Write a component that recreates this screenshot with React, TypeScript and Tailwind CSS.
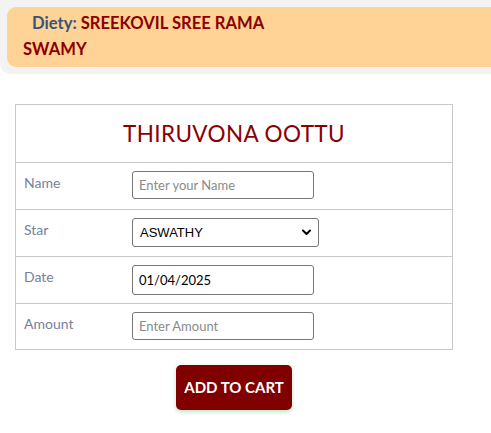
import React from "react";

const labelCls =
  "w-[116px] shrink-0 pl-[8px] pt-[10px] text-[14px] leading-[20px] text-[#76819b]";
const inputCls =
  "mt-[8px] w-[182px] h-[28px] border border-[#767676] rounded-[3px] px-[6px] text-[13px] text-black placeholder:text-[#8a8a8a] bg-white outline-none";

export default function App() {
  return (
    <div
      className="min-h-[433px] w-[491px] bg-white"
      style={{ fontFamily: "Lato, 'Open Sans', sans-serif" }}
    >
      <div className="bg-[#f3f3f3] pt-[7px] pl-[7px] pb-[7px] rounded-bl-[10px]">
        <div className="bg-[#fed395] rounded-l-[9px] pl-[16px] pt-[3px] pb-[5px]">
          <div className="text-[16.6px] leading-[26px] font-bold">
            <div className="pl-[9px]">
              <span className="text-[#3b5278]">Diety: </span>
              <span className="text-[#8b0000]">SREEKOVIL SREE RAMA</span>
            </div>
            <div className="text-[#8b0000]">SWAMY</div>
          </div>
        </div>
      </div>

      <div className="ml-[15px] mt-[30px] w-[438px] border border-[#c8c8c8]">
        <div className="h-[57px] flex items-center justify-center text-[22.5px] text-[#8b0000] tracking-[0.4px]">
          THIRUVONA OOTTU
        </div>
        <div className="h-[47px] border-t border-[#c8c8c8] flex">
          <div className={labelCls}>Name</div>
          <input className={inputCls} placeholder="Enter your Name" />
        </div>
        <div className="h-[47px] border-t border-[#c8c8c8] flex">
          <div className={labelCls}>Star</div>
          <div className="mt-[8px] relative w-[187px] h-[29px] border border-[#767676] rounded-[3px] bg-white flex items-center">
            <span
              className="pl-[7px] text-[13px] text-black"
              style={{ fontFamily: "'Liberation Sans', Arial, sans-serif" }}
            >
              ASWATHY
            </span>
            <svg
              className="absolute right-[7px] top-[10px]"
              width="9"
              height="7"
              viewBox="0 0 9 7"
            >
              <path
                d="M1 1.5 L4.5 5 L8 1.5"
                fill="none"
                stroke="#000"
                strokeWidth="2"
                strokeLinecap="round"
                strokeLinejoin="round"
              />
            </svg>
          </div>
        </div>
        <div className="h-[47px] border-t border-[#c8c8c8] flex">
          <div className={labelCls}>Date</div>
          <input
            className={inputCls + " h-[30px]"}
            defaultValue="01/04/2025"
            readOnly
          />
        </div>
        <div className="h-[46px] border-t border-[#c8c8c8] flex">
          <div className={labelCls}>Amount</div>
          <input className={inputCls} placeholder="Enter Amount" />
        </div>
      </div>

      <div className="ml-[15px] w-[438px] flex justify-center mt-[15px]">
        <button className="w-[116px] h-[45px] bg-[#800000] rounded-[5px] text-white font-bold text-[15px] shadow-[0_2px_4px_rgba(0,140,60,0.25)]">
          ADD TO CART
        </button>
      </div>
    </div>
  );
}
